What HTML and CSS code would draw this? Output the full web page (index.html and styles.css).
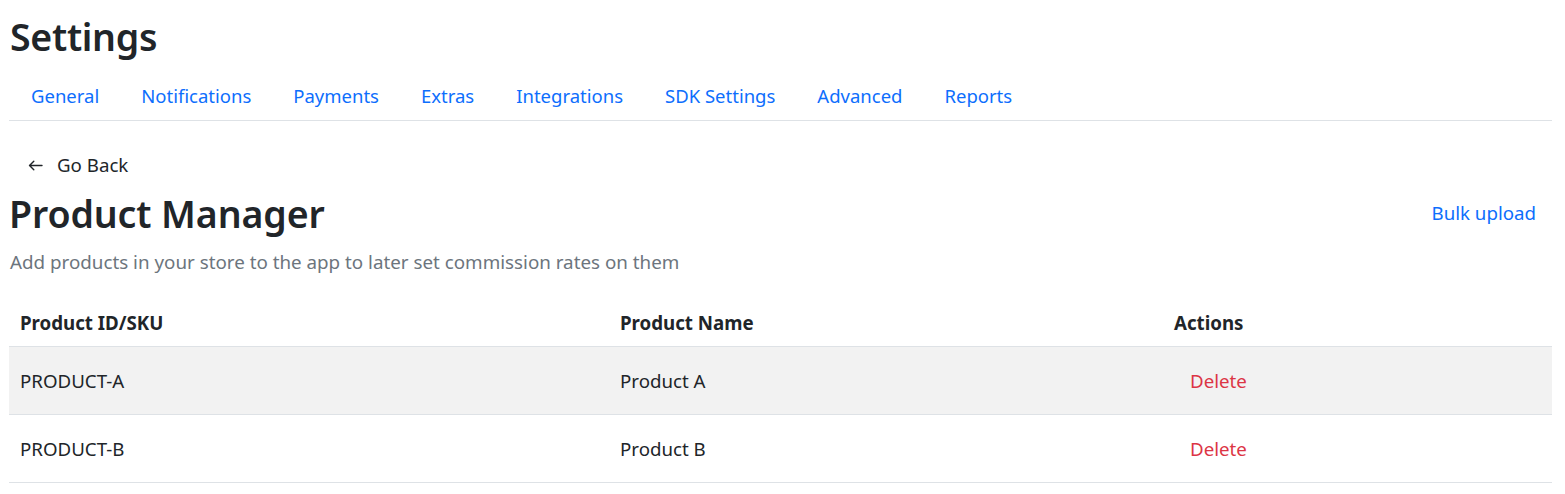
FILE: index.html
```html
<!DOCTYPE html>
<html lang="en">
<head>
<meta charset="utf-8">
<title>Settings</title>
<link rel="stylesheet" href="styles.css">
</head>
<body>
<div class="page">
  <h1 class="title main">Settings</h1>
  <nav class="tabs">
    <a href="#">General</a>
    <a href="#">Notifications</a>
    <a href="#">Payments</a>
    <a href="#">Extras</a>
    <a href="#">Integrations</a>
    <a href="#">SDK Settings</a>
    <a href="#">Advanced</a>
    <a href="#">Reports</a>
  </nav>
  <a class="back" href="#"><svg class="arrow" width="15" height="11" viewBox="0 0 15 11" fill="none" stroke="#212529" stroke-width="1.4" stroke-linecap="round" stroke-linejoin="round"><path d="M14 5.5H1.5M5.8 1.2L1.5 5.5L5.8 9.8"/></svg>Go Back</a>
  <div class="header">
    <h2 class="title pm">Product Manager</h2>
    <a class="bulk" href="#">Bulk upload</a>
  </div>
  <p class="sub">Add products in your store to the app to later set commission rates on them</p>
  <table class="products">
    <colgroup>
      <col class="c1"><col class="c2"><col class="c3">
    </colgroup>
    <thead>
      <tr><th>Product ID/SKU</th><th>Product Name</th><th class="act">Actions</th></tr>
    </thead>
    <tbody>
      <tr class="alt"><td>PRODUCT-A</td><td>Product A</td><td class="act"><a class="del" href="#">Delete</a></td></tr>
      <tr><td>PRODUCT-B</td><td>Product B</td><td class="act"><a class="del" href="#">Delete</a></td></tr>
    </tbody>
  </table>
</div>
</body>
</html>
```
FILE: styles.css
```css
html, body { margin: 0; padding: 0; background: #fff; }
body {
  font-family: "Noto Sans", "Open Sans", sans-serif;
  color: #212529;
  font-size: 18.7px;
}
.page { padding: 0 13px 0 9px; }
.title {
  font-size: 37.5px;
  font-weight: 600;
  margin: 0;
  line-height: 45px;
  letter-spacing: -0.3px;
}
.title.pm { letter-spacing: -0.1px; }
.main { padding-top: 14px; margin-left: 1px; }
a { text-decoration: none; color: #0d6efd; }
.tabs {
  display: flex;
  border-bottom: 1px solid #dee2e6;
  margin-top: 18px;
  padding-left: 1px;
}
.tabs a {
  padding: 5px 21px 11px;
  line-height: 27px;
  font-size: 18.5px;
}
.back {
  display: flex;
  width: fit-content;
  align-items: center;
  color: #212529;
  margin: 30px 0 0 19px;
  line-height: 27px;
}
.arrow { margin-right: 14px; margin-top: 1px; }
.header {
  display: flex;
  justify-content: space-between;
  align-items: center;
  margin-top: 13px;
}
.bulk { margin-right: 16px; line-height: 27px; margin-top: -3px; }
.sub {
  margin: 13px 0 0 1px;
  color: #6c757d;
  line-height: 27px;
  font-size: 18.8px;
}
.products {
  width: 100%;
  border-collapse: collapse;
  margin-top: 25px;
}
.c1 { width: 600px; }
.c2 { width: 554px; }
th {
  text-align: left;
  font-weight: 700;
  padding: 8px 11px 10px;
  border-bottom: 1px solid #dee2e6;
  line-height: 27px;
}
td {
  padding: 20px 11px;
  border-bottom: 1px solid #dee2e6;
  line-height: 27px;
}
tr.alt td { background: #f2f2f2; }
td.act { padding-left: 27px; }
.del { color: #dc3545; }
```
